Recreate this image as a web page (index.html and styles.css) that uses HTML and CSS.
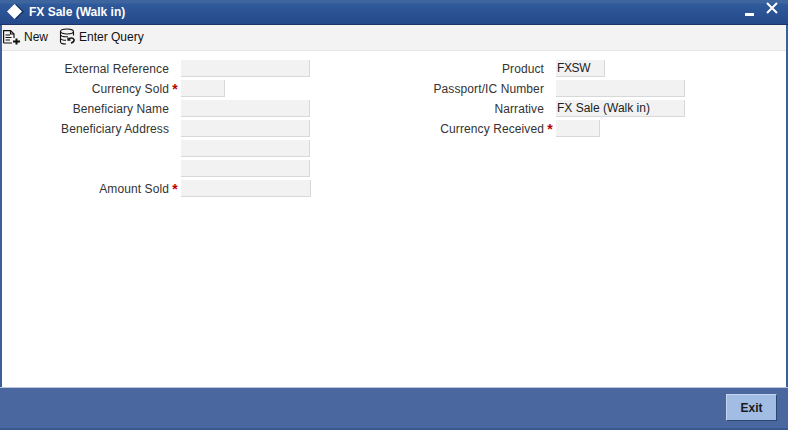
FILE: index.html
```html
<!DOCTYPE html>
<html lang="en">
<head>
    <meta charset="UTF-8">
    <title>FX Sale (Walk in)</title>
    <link rel="stylesheet" href="styles.css">
</head>
<body>
    <div class="window">
        <div class="titlebar">
            <svg class="title-icon" width="17" height="17" viewBox="0 0 17 17"><path d="M9 1 L17 8.500 L9 16.500 L3 9 Z" fill="#12305f"/><path d="M7.500 1 L15 8.500 L7.500 16 L0 8.500 Z" fill="#fff"/></svg>
            <span class="title-text">FX Sale (Walk in)</span>
            <svg class="win-min" width="9" height="3" viewBox="0 0 9 3"><rect width="9" height="3" fill="#fff"/></svg>
            <svg class="win-close" width="12" height="12" viewBox="0 0 12 12"><path d="M1 1 L11 11 M11 1 L1 11" stroke="#fff" stroke-width="2" fill="none"/></svg>
        </div>
        <div class="toolbar">
            <div class="tool">
                <svg width="18" height="16" viewBox="0 0 18 16" fill="none" stroke="#111" stroke-width="1.200"><path d="M.6 14V1.600H7.500L11 5V9"/><path d="M7.500 1.600V5H11"/><path d="M2.500 6H7M2.500 8.500H8.500M2.500 11H7M.6 14H9"/><path d="M13.500 9.500V15.500M10 12.500H17" stroke-width="2"/></svg>
                <span>New</span>
            </div>
            <div class="tool">
                <svg width="17" height="17" viewBox="0 0 17 17" fill="none" stroke="#111" stroke-width="1.100"><ellipse cx="8" cy="3.500" rx="6.500" ry="2.500"/><path d="M1.500 3.500V14C1.500 15 3.500 16 7 16M14.500 3.500V7.500"/><path d="M1.500 7C2.500 8.500 6 9 9 8.700M1.500 10.500C2.500 12 4.500 12.300 7 12.300"/><path d="M9.500 11.500C10.500 9.500 14 9.500 15 11.500C15.500 13 14 14.500 12 15" stroke-width="1.600"/><path d="M9 9.500V12H11.500" stroke-width="1.300"/></svg>
                <span>Enter Query</span>
            </div>
        </div>
        <div class="form">
            <div class="col col-left">
                <div class="row"><label>External Reference</label><i class="req"></i><div class="field"></div></div>
                <div class="row"><label>Currency Sold</label><i class="req">*</i><div class="field short"></div></div>
                <div class="row"><label>Beneficiary Name</label><i class="req"></i><div class="field"></div></div>
                <div class="row"><label>Beneficiary Address</label><i class="req"></i><div class="field"></div></div>
                <div class="row"><label></label><i class="req"></i><div class="field"></div></div>
                <div class="row"><label></label><i class="req"></i><div class="field"></div></div>
                <div class="row"><label>Amount Sold</label><i class="req">*</i><div class="field wide"></div></div>
            </div>
            <div class="col col-right">
                <div class="row"><label>Product</label><i class="req"></i><div class="field product">FXSW</div></div>
                <div class="row"><label>Passport/IC Number</label><i class="req"></i><div class="field"></div></div>
                <div class="row"><label>Narrative</label><i class="req"></i><div class="field">FX Sale (Walk in)</div></div>
                <div class="row"><label>Currency Received</label><i class="req">*</i><div class="field short"></div></div>
            </div>
        </div>
        <div class="footer">
            <button class="exit-btn">Exit</button>
        </div>
    </div>
</body>
</html>
```

FILE: styles.css
```css
html, body {
    margin: 0;
    height: 100%;
}
body {
    font-family: "Liberation Sans", Arial, sans-serif;
    font-size: 12px;
    color: #333;
    overflow: hidden;
}
.window {
    height: 430px;
    display: flex;
    flex-direction: column;
    box-sizing: border-box;
    background: #fff;
    border-left: 2px solid #39609b;
    border-right: 2px solid #39609b;
}
.titlebar {
    height: 25px;
    margin: 0 -2px;
    box-sizing: border-box;
    display: flex;
    align-items: center;
    padding: 0 10px 0 7px;
    background: linear-gradient(#3f659f 0, #3f659f 3px, #2f5a9c 4px, #24498a 24px);
    border-bottom: 1px solid #1c3468;
}
.title-icon {
    margin: -1px 5px 0 0;
}
.title-text {
    flex: 1;
    color: #fff;
    font-weight: bold;
    font-size: 12px;
}
.win-min {
    margin: 5px 12px 0 0;
}
.win-close {
    margin-bottom: 9px;
}
.toolbar {
    height: 26px;
    box-sizing: border-box;
    display: flex;
    align-items: center;
    gap: 11px;
    padding: 0 1px 2px 1px;
    background: #f3f3f3;
    border-bottom: 1px solid #e4e4e4;
    color: #111;
}
.tool {
    display: flex;
    align-items: center;
    gap: 3px;
}
.form {
    flex: 1;
    display: flex;
    padding-top: 9px;
}
.col-left {
    width: 429px;
}
.row {
    display: flex;
    height: 20px;
}
.row label {
    text-align: right;
    line-height: 18px;
    color: #333;
    letter-spacing: 0.1px;
}
.col-left label {
    width: 167px;
}
.col-right label {
    width: 113px;
}
.req {
    width: 12px;
    color: #c00000;
    font-style: normal;
    font-weight: bold;
    font-size: 14px;
    line-height: 19px;
    text-align: center;
}
.field {
    width: 127px;
    height: 16px;
    box-sizing: content-box;
    background: #f2f2f2;
    border-right: 1px solid #d8d8d8;
    border-bottom: 1px solid #d8d8d8;
    color: #222;
    line-height: 17px;
    padding-left: 1px;
}
.field.short {
    width: 42px;
}
.field.product {
    width: 47px;
    letter-spacing: -0.4px;
}
.field.wide {
    width: 128px;
}
.footer {
    height: 43px;
    box-sizing: border-box;
    margin: 0 -2px;
    padding: 6px 11px 0 0;
    display: flex;
    justify-content: flex-end;
    align-items: flex-start;
    background: #4a679f;
    border-top: 1px solid #b8c6dd;
    border-bottom: 2px solid #39588f;
}
.exit-btn {
    width: 51px;
    height: 27px;
    padding: 0;
    background: #a2bde3;
    border: 1px solid;
    border-color: #c5d5ee #2e4673 #2e4673 #c5d5ee;
    font-family: inherit;
    font-size: 12px;
    font-weight: bold;
    color: #1a1a1a;
}
```
